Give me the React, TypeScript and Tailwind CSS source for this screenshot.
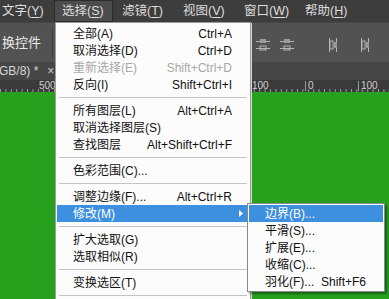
type Item =
  | { sep: true }
  | { label: string; key?: string; disabled?: boolean; active?: boolean; sub?: boolean; sep?: false };

const menuItems: Item[] = [
  { label: "全部(A)", key: "Ctrl+A" },
  { label: "取消选择(D)", key: "Ctrl+D" },
  { label: "重新选择(E)", key: "Shift+Ctrl+D", disabled: true },
  { label: "反向(I)", key: "Shift+Ctrl+I" },
  { sep: true },
  { label: "所有图层(L)", key: "Alt+Ctrl+A" },
  { label: "取消选择图层(S)" },
  { label: "查找图层", key: "Alt+Shift+Ctrl+F" },
  { sep: true },
  { label: "色彩范围(C)..." },
  { sep: true },
  { label: "调整边缘(F)...", key: "Alt+Ctrl+R" },
  { label: "修改(M)", active: true, sub: true },
  { sep: true },
  { label: "扩大选取(G)" },
  { label: "选取相似(R)" },
  { sep: true },
  { label: "变换选区(T)" },
  { sep: true },
];

const subItems: Item[] = [
  { label: "边界(B)...", active: true },
  { label: "平滑(S)..." },
  { label: "扩展(E)..." },
  { label: "收缩(C)..." },
  { label: "羽化(F)...", key: "Shift+F6" },
];

const topMenus = [
  ["文字", "Y"],
  ["选择", "S"],
  ["滤镜", "T"],
  ["视图", "V"],
  ["窗口", "W"],
  ["帮助", "H"],
];

const MenuRow = ({ item }: { item: Item }) => {
  if (item.sep) {
    return (
      <div className="h-[9px] flex items-center px-[2px]">
        <div className="h-px w-full bg-[#c4c4c4]" />
      </div>
    );
  }
  const color = item.active ? "bg-[#3d8fdf] text-white" : item.disabled ? "text-[#a8a8a8]" : "text-[#111]";
  return (
    <div className={`h-[17px] flex items-center justify-between pl-[16px] pr-[17px] leading-none whitespace-nowrap relative ${color}`}>
      <span>{item.label}</span>
      {item.key && <span>{item.key}</span>}
      {item.sub && (
        <svg className="absolute right-[6px] top-[5px]" width="4" height="7" viewBox="0 0 4 7">
          <path d="M0 0 L4 3.5 L0 7 Z" fill="currentColor" />
        </svg>
      )}
    </div>
  );
};

const DistIcon = () => (
  <svg width="16" height="14" viewBox="0 0 16 14">
    <path d="M1 3.5 H15 M1 10.5 H15" stroke="#b5b5b5" strokeWidth="1" />
    <rect x="5" y="1" width="6" height="4" fill="#9a9a9a" />
    <rect x="5" y="8" width="6" height="4" fill="none" stroke="#b5b5b5" />
  </svg>
);

const AlignIcon = () => (
  <svg width="12" height="16" viewBox="0 0 12 16">
    <path d="M2.5 1 V15 M9.5 1 V15" stroke="#b5b5b5" />
    <rect x="3" y="4" width="3" height="8" fill="none" stroke="#b5b5b5" />
    <rect x="7" y="5" width="3" height="6" fill="#9a9a9a" />
  </svg>
);

export default function App() {
  return (
    <div className="relative w-[389px] h-[299px] overflow-hidden flex flex-col font-['Liberation_Sans','Noto_Sans_CJK_SC',sans-serif] text-[12px]">
      {/* menu bar */}
      <div className="h-[22px] shrink-0 flex items-center bg-[#3d3d3d] text-[#dedede] text-[12.5px] leading-none whitespace-nowrap">
        {topMenus.map(([name, k], i) => (
          <div
            key={k}
            className={`h-full shrink-0 flex items-center ${
              i === 0
                ? "w-[54px] pl-[2px]"
                : i === 1
                ? "w-[59px] pl-[7px] bg-[#4c4c4c] border border-[#2c2c2c]"
                : "w-[61px] pl-[9px]"
            }`}
          >
            {name}(<u className="underline-offset-2">{k}</u>)
          </div>
        ))}
      </div>

      {/* options bar */}
      <div className="h-[40px] shrink-0 flex items-center bg-[#525252] border-t border-[#474747]">
        <div className="h-[30px] w-[53px] shrink-0 flex items-center border-r border-[#3e3e3e] text-[13px] text-[#eaeaea] leading-none whitespace-nowrap pl-[2px]">
          换控件
        </div>
        <div className="ml-[202px] flex items-center gap-[8px] pt-[4px]">
          <DistIcon />
          <DistIcon />
          <div className="w-[16px]" />
          <AlignIcon />
          <div className="w-[4px]" />
          <AlignIcon />
          <div className="w-[4px]" />
          <AlignIcon />
        </div>
      </div>

      {/* tab bar */}
      <div className="h-[18px] shrink-0 flex items-center bg-[#464646] text-[#d8d8d8] text-[12px] leading-none whitespace-nowrap">
        <span className="-ml-[1px]">GB/8) *</span>
        <span className="ml-[9px] text-[#cfcfcf]">×</span>
      </div>

      {/* ruler */}
      <div className="h-[12px] shrink-0 relative bg-[#3a3a3a] text-[#cfcfcf] text-[10px] leading-none">
        <svg className="absolute left-0 bottom-0" width="389" height="4" viewBox="0 0 389 4">
          {Array.from({ length: 78 }).map((_, i) => (
            <line key={i} x1={i * 5.4 + 0.5} y1="1" x2={i * 5.4 + 0.5} y2="4" stroke="#9a9a9a" />
          ))}
        </svg>
        <span className="absolute left-[39px] top-[1px]">500</span>
        <span className="absolute left-[252px] top-[1px]">100</span>
        <span className="absolute left-[305px] top-[1px] border-l border-[#9a9a9a] pl-[2px]">0</span>
        <span className="absolute left-[358px] top-[1px] border-l border-[#9a9a9a] pl-[2px]">100</span>
      </div>

      {/* canvas */}
      <div className="flex-1 bg-[#27a11e]" />

      {/* dropdown */}
      <div className="absolute left-[55px] top-[22px] w-[196px] bg-[#fcfcfc] border border-[#9c9c9c] px-px pt-[2px] shadow-[1px_1px_0_#d8d8d8]">
        {menuItems.map((it, i) => (
          <MenuRow key={i} item={it} />
        ))}
      </div>

      {/* submenu */}
      <div className="absolute left-[247px] top-[203px] w-[138px] bg-[#fcfcfc] border border-[#8a8a8a] p-px shadow-[2px_2px_2px_rgba(0,0,0,0.4)]">
        {subItems.map((it, i) => (
          <MenuRow key={i} item={it} />
        ))}
      </div>
    </div>
  );
}
